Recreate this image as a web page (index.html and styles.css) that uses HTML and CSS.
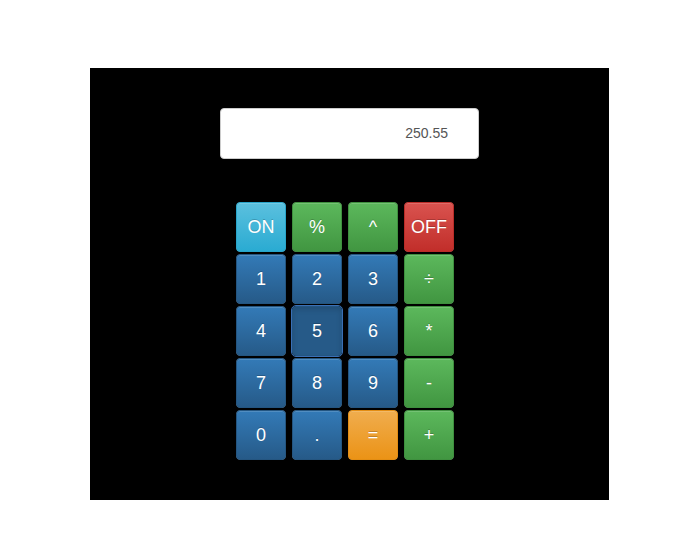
FILE: index.html
```html
<!DOCTYPE html>
<html>
<head>
<meta charset="utf-8">
<link rel="stylesheet" href="styles.css">
</head>
<body>
<div class="calc">
  <div class="display">250.55</div>
  <div class="keys">
    <button class="btn info">ON</button>
    <button class="btn success">%</button>
    <button class="btn success">^</button>
    <button class="btn danger">OFF</button>
    <button class="btn primary">1</button>
    <button class="btn primary">2</button>
    <button class="btn primary">3</button>
    <button class="btn success">÷</button>
    <button class="btn primary">4</button>
    <button class="btn primary active">5</button>
    <button class="btn primary">6</button>
    <button class="btn success">*</button>
    <button class="btn primary">7</button>
    <button class="btn primary">8</button>
    <button class="btn primary">9</button>
    <button class="btn success">-</button>
    <button class="btn primary">0</button>
    <button class="btn primary">.</button>
    <button class="btn warning">=</button>
    <button class="btn success">+</button>
  </div>
</div>
</body>
</html>
```
FILE: styles.css
```css
html, body {
  margin: 0;
  padding: 0;
  background: #fff;
  font-family: "Liberation Sans", Arial, sans-serif;
}
.calc {
  margin: 68px 0 0 90px;
  width: 519px;
  height: 432px;
  box-sizing: border-box;
  background: #000;
  padding-top: 40px;
}
.display {
  box-sizing: border-box;
  width: 259px;
  height: 51px;
  margin-left: 130px;
  background: #fff;
  border: 1px solid #ccc;
  border-radius: 4px;
  color: #555;
  font-size: 14px;
  line-height: 49px;
  text-align: right;
  padding-right: 30px;
}
.keys {
  margin: 43px 0 0 146px;
  display: grid;
  grid-template-columns: repeat(4, 50px);
  grid-auto-rows: 50px;
  column-gap: 6px;
  row-gap: 2px;
}
.btn {
  box-sizing: border-box;
  width: 50px;
  height: 50px;
  margin: 0;
  padding: 0;
  border: 1px solid transparent;
  border-radius: 4px;
  color: #fff;
  font-family: "Liberation Sans", Arial, sans-serif;
  font-size: 18px;
  text-shadow: 0 -1px 0 rgba(0,0,0,.2);
  box-shadow: inset 0 1px 0 rgba(255,255,255,.15), 0 1px 1px rgba(0,0,0,.075);
  cursor: pointer;
}
.primary {
  background-image: linear-gradient(to bottom, #337ab7 0, #265a88 100%);
  border-color: #245580;
}
.success {
  background-image: linear-gradient(to bottom, #5cb85c 0, #419641 100%);
  border-color: #3e8f3e;
}
.info {
  background-image: linear-gradient(to bottom, #5bc0de 0, #2aabd2 100%);
  border-color: #28a4c9;
}
.warning {
  background-image: linear-gradient(to bottom, #f0ad4e 0, #eb9316 100%);
  border-color: #e38d13;
}
.danger {
  background-image: linear-gradient(to bottom, #d9534f 0, #c12e2a 100%);
  border-color: #b92c28;
}
.primary.active {
  background-image: none;
  background-color: #265a88;
  border-color: #245580;
  box-shadow: inset 0 3px 5px rgba(0,0,0,.125);
  outline: 1px solid #3a6fb5;
  outline-offset: 0;
}
```
